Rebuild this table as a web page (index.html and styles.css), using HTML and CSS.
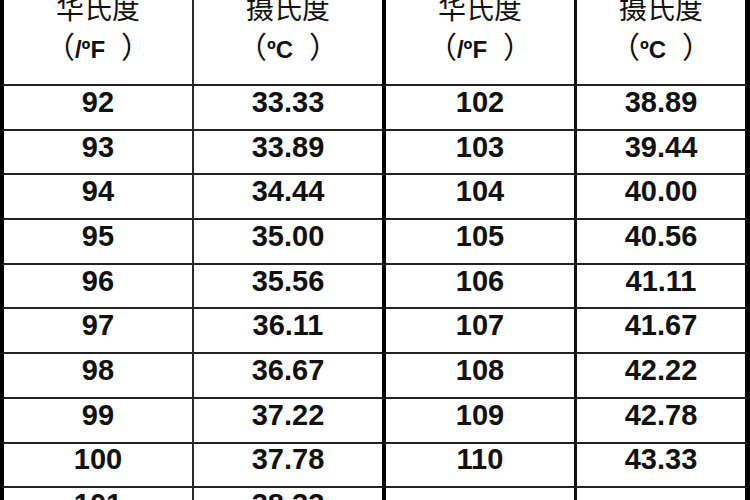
FILE: index.html
```html
<!DOCTYPE html>
<html lang="zh-CN">
<head>
<meta charset="utf-8">
<title>华氏度 摄氏度 对照表</title>
<link rel="stylesheet" href="styles.css">
</head>
<body>
<div class="table">
  <div class="cell h c1"><div class="zh">华氏度</div><div class="unit">（<span class="lat">/ºF</span><span class="gap"></span>）</div></div>
  <div class="cell h c2"><div class="zh">摄氏度</div><div class="unit">（<span class="lat">ºC</span><span class="gap"></span>）</div></div>
  <div class="cell h c3"><div class="zh">华氏度</div><div class="unit">（<span class="lat">/ºF</span><span class="gap"></span>）</div></div>
  <div class="cell h c4"><div class="zh">摄氏度</div><div class="unit">（<span class="lat">ºC</span><span class="gap"></span>）</div></div>

  <div class="cell c1">92</div><div class="cell c2">33.33</div><div class="cell c3">102</div><div class="cell c4">38.89</div>
  <div class="cell c1">93</div><div class="cell c2">33.89</div><div class="cell c3">103</div><div class="cell c4">39.44</div>
  <div class="cell c1">94</div><div class="cell c2">34.44</div><div class="cell c3">104</div><div class="cell c4">40.00</div>
  <div class="cell c1">95</div><div class="cell c2">35.00</div><div class="cell c3">105</div><div class="cell c4">40.56</div>
  <div class="cell c1">96</div><div class="cell c2">35.56</div><div class="cell c3">106</div><div class="cell c4">41.11</div>
  <div class="cell c1">97</div><div class="cell c2">36.11</div><div class="cell c3">107</div><div class="cell c4">41.67</div>
  <div class="cell c1">98</div><div class="cell c2">36.67</div><div class="cell c3">108</div><div class="cell c4">42.22</div>
  <div class="cell c1">99</div><div class="cell c2">37.22</div><div class="cell c3">109</div><div class="cell c4">42.78</div>
  <div class="cell c1">100</div><div class="cell c2">37.78</div><div class="cell c3">110</div><div class="cell c4">43.33</div>
  <div class="cell c1">101</div><div class="cell c2">38.33</div><div class="cell c3"></div><div class="cell c4"></div>
</div>
</body>
</html>
```

FILE: styles.css
```css
html, body {
  margin: 0;
  padding: 0;
  background: #fff;
  overflow: hidden;
}

.table {
  margin-top: -12px;
  display: grid;
  grid-template-columns: 192px 190px 192px 176px;
  grid-template-rows: 98px;
  grid-auto-rows: 44.7px;
  font-family: "Liberation Sans", "Noto Sans CJK SC", sans-serif;
  color: #111;
}

.cell {
  box-sizing: border-box;
  border-bottom: 2px solid #222;
  display: flex;
  align-items: center;
  justify-content: center;
  padding-bottom: 10px;
  font-size: 29px;
  font-weight: bold;
}

.c1 { border-left: 4px solid #000; }
.c2 { border-left: 2px solid #2a2a2a; }
.c3 { border-left: 4px solid #000; }
.c4 { border-left: 3px solid #111; border-right: 5px solid #000; }

.h {
  flex-direction: column;
  justify-content: flex-end;
  padding-bottom: 20px;
  font-family: "Noto Sans CJK SC", "Liberation Sans", sans-serif;
  font-weight: normal;
  font-size: 28px;
}

.zh, .unit {
  line-height: 38px;
  height: 38px;
  white-space: nowrap;
}

.unit {
  font-size: 30px;
}

.lat {
  font-family: "Liberation Sans", sans-serif;
  font-weight: bold;
  font-size: 24px;
}

.gap {
  display: inline-block;
  width: 16px;
}
```
